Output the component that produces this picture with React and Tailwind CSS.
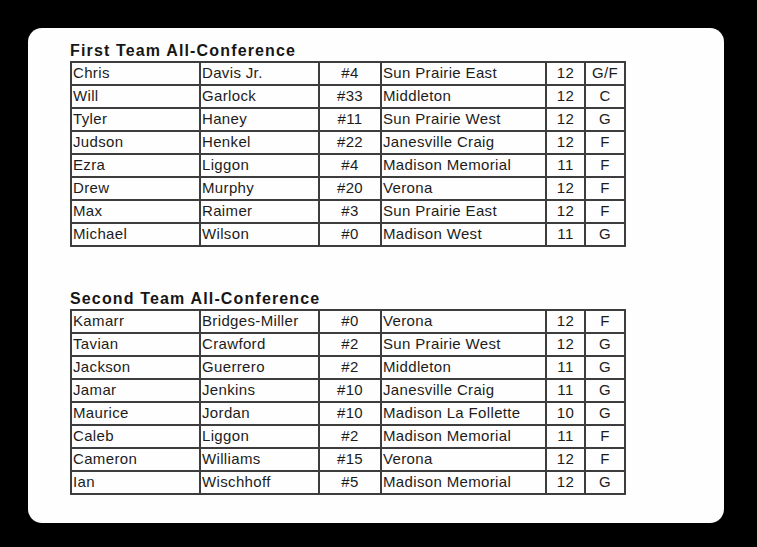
import React from "react";

const first = [
  ["Chris", "Davis Jr.", "#4", "Sun Prairie East", "12", "G/F"],
  ["Will", "Garlock", "#33", "Middleton", "12", "C"],
  ["Tyler", "Haney", "#11", "Sun Prairie West", "12", "G"],
  ["Judson", "Henkel", "#22", "Janesville Craig", "12", "F"],
  ["Ezra", "Liggon", "#4", "Madison Memorial", "11", "F"],
  ["Drew", "Murphy", "#20", "Verona", "12", "F"],
  ["Max", "Raimer", "#3", "Sun Prairie East", "12", "F"],
  ["Michael", "Wilson", "#0", "Madison West", "11", "G"],
];

const second = [
  ["Kamarr", "Bridges-Miller", "#0", "Verona", "12", "F"],
  ["Tavian", "Crawford", "#2", "Sun Prairie West", "12", "G"],
  ["Jackson", "Guerrero", "#2", "Middleton", "11", "G"],
  ["Jamar", "Jenkins", "#10", "Janesville Craig", "11", "G"],
  ["Maurice", "Jordan", "#10", "Madison La Follette", "10", "G"],
  ["Caleb", "Liggon", "#2", "Madison Memorial", "11", "F"],
  ["Cameron", "Williams", "#15", "Verona", "12", "F"],
  ["Ian", "Wischhoff", "#5", "Madison Memorial", "12", "G"],
];

function Roster({ title, rows }) {
  return (
    <div>
      <div className="text-[16px] leading-[16px] font-bold tracking-[1.15px] text-[#161616] mb-[2px]">
        {title}
      </div>
      <table className="table-fixed border-collapse w-[554px] text-[15px] leading-[20px] tracking-[0.35px] text-[#1c1c1c]">
        <colgroup>
          <col className="w-[129px]" />
          <col className="w-[119px]" />
          <col className="w-[62px]" />
          <col className="w-[165px]" />
          <col className="w-[39px]" />
          <col className="w-[40px]" />
        </colgroup>
        <tbody>
          {rows.map((r, i) => (
            <tr key={i} className="h-[23px]">
              <td className="border-2 border-[#3d3d3d] px-[1px] pt-0 pb-[1px] text-left whitespace-nowrap">{r[0]}</td>
              <td className="border-2 border-[#3d3d3d] px-[1px] pt-0 pb-[1px] text-left whitespace-nowrap">{r[1]}</td>
              <td className="border-2 border-[#3d3d3d] px-[1px] pt-0 pb-[1px] text-center whitespace-nowrap">{r[2]}</td>
              <td className="border-2 border-[#3d3d3d] px-[1px] pt-0 pb-[1px] text-left whitespace-nowrap">{r[3]}</td>
              <td className="border-2 border-[#3d3d3d] px-[1px] pt-0 pb-[1px] text-center whitespace-nowrap">{r[4]}</td>
              <td className="border-2 border-[#3d3d3d] px-[1px] pt-0 pb-[1px] text-center whitespace-nowrap">{r[5]}</td>
            </tr>
          ))}
        </tbody>
      </table>
    </div>
  );
}

export default function App() {
  return (
    <div
      className="w-[757px] h-[547px] bg-black pt-[28px] pl-[28px]"
      style={{ fontFamily: '"Liberation Sans", Arial, sans-serif' }}
    >
      <div className="w-[696px] h-[495px] rounded-[14px] bg-[#fefefe] pl-[42px] pt-[15px] flex flex-col gap-[44px]">
        <Roster title="First Team All-Conference" rows={first} />
        <Roster title="Second Team All-Conference" rows={second} />
      </div>
    </div>
  );
}
